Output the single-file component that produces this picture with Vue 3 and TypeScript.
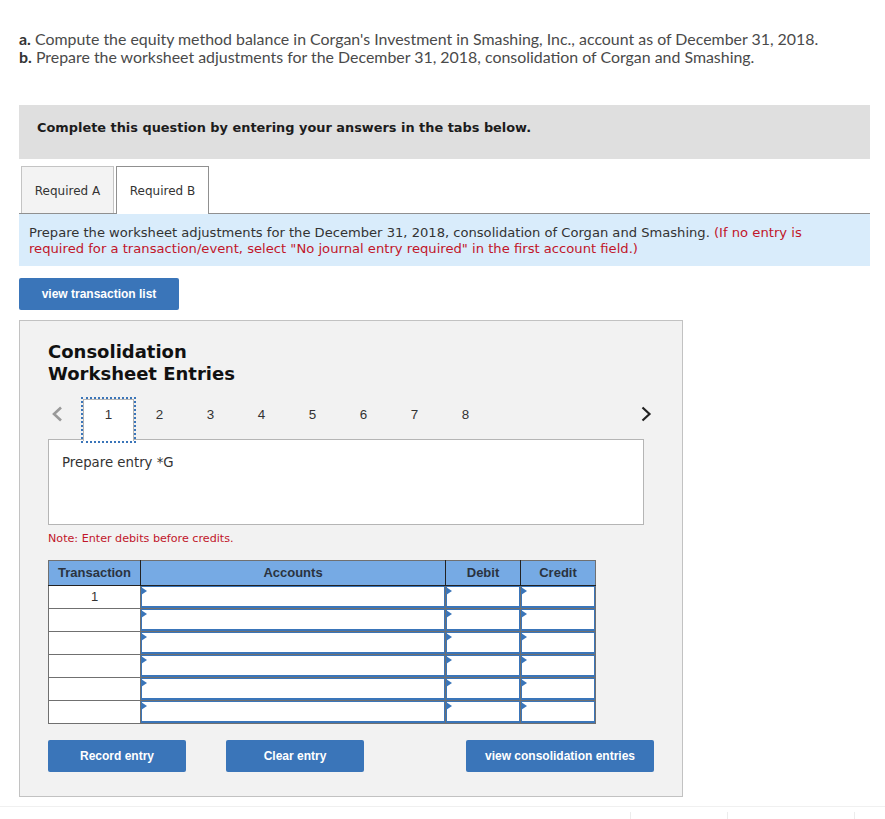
<template>
  <div class="page">
    <div class="intro">
      <p><b>a.</b> Compute the equity method balance in Corgan's Investment in Smashing, Inc., account as of December 31, 2018.</p>
      <p><b>b.</b> Prepare the worksheet adjustments for the December 31, 2018, consolidation of Corgan and Smashing.</p>
    </div>

    <div class="complete">Complete this question by entering your answers in the tabs below.</div>

    <div class="tabs">
      <div class="tab">Required A</div>
      <div class="tab active">Required B</div>
    </div>

    <div class="instructions">
      Prepare the worksheet adjustments for the December 31, 2018, consolidation of Corgan and Smashing.
      <span class="red">(If no entry is required for a transaction/event, select "No journal entry required" in the first account field.)</span>
    </div>

    <button class="btn list-btn">view transaction list</button>

    <div class="panel">
      <h2>Consolidation<br />Worksheet Entries</h2>

      <div class="pager">
        <svg class="arrow" width="14" height="20" viewBox="0 0 14 20">
          <path d="M11 3.5 L4 10 L11 16.5" fill="none" stroke="#999" stroke-width="2.6" />
        </svg>
        <div class="pages">
          <div v-for="n in pages" :key="n" class="page-num" :class="{ current: n === 1 }">{{ n }}</div>
        </div>
        <svg class="arrow" width="14" height="20" viewBox="0 0 14 20">
          <path d="M2.5 3.5 L9.5 10 L2.5 16.5" fill="none" stroke="#222" stroke-width="2.2" />
        </svg>
      </div>

      <div class="entry-box">Prepare entry *G</div>
      <div class="note">Note: Enter debits before credits.</div>

      <table class="entries">
        <thead>
          <tr>
            <th class="c-trans">Transaction</th>
            <th class="c-acct">Accounts</th>
            <th class="c-num">Debit</th>
            <th class="c-num">Credit</th>
          </tr>
        </thead>
        <tbody>
          <tr v-for="(row, i) in rows" :key="i">
            <td class="trans">{{ row }}</td>
            <td v-for="c in 3" :key="c" class="field"><div class="input"></div></td>
          </tr>
        </tbody>
      </table>

      <div class="actions">
        <button class="btn record">Record entry</button>
        <button class="btn clear">Clear entry</button>
        <button class="btn view">view consolidation entries</button>
      </div>
    </div>

    <div class="footer">
      <span class="tick t1"></span>
      <span class="tick t2"></span>
      <span class="tick t3"></span>
    </div>
  </div>
</template>

<script setup lang="ts">
const pages: number[] = [1, 2, 3, 4, 5, 6, 7, 8];
const rows: string[] = ['1', '', '', '', '', ''];
</script>

<style>
body {
  background: #fff;
}
</style>

<style scoped>
.page {
  width: 885px;
  height: 819px;
  overflow: hidden;
  box-sizing: border-box;
  padding: 30px 15px 0 19px;
  font-family: "DejaVu Sans", sans-serif;
  color: #222;
}

.intro {
  font-family: "Lato", sans-serif;
  font-size: 15.92px;
  line-height: 18px;
  color: #4a4a4a;
  height: 75px;
}

.intro p {
  margin: 0;
  white-space: nowrap;
}

.intro b {
  color: #333;
}

.complete {
  height: 54px;
  line-height: 45px;
  background: #dfdfdf;
  padding-left: 18px;
  font-size: 12.9px;
  font-weight: bold;
  color: #1c1c1c;
}

.tabs {
  display: flex;
  gap: 2px;
  padding: 7px 0 0 2px;
  border-bottom: 1px solid #909090;
  height: 47px;
}

.tab {
  width: 93px;
  height: 47px;
  box-sizing: border-box;
  border: 1px solid #c4c4c4;
  border-bottom: none;
  background: #f3f3f3;
  font-size: 12px;
  line-height: 48px;
  text-align: center;
  color: #333;
}

.tab.active {
  height: 48px;
  background: #fff;
  border-color: #909090;
  position: relative;
}

.instructions {
  background: #d9ecfb;
  height: 52px;
  box-sizing: border-box;
  padding: 11px 10px 0;
  font-size: 13.1px;
  line-height: 16px;
  color: #333;
}

.red {
  color: #c1162a;
  font-size: 13.15px;
}

.btn {
  display: block;
  border: none;
  border-radius: 2px;
  background: #3a75b9;
  color: #fff;
  font-family: "Liberation Sans", sans-serif;
  font-size: 12px;
  font-weight: bold;
  height: 32px;
  padding: 0;
}

.list-btn {
  width: 160px;
  margin-top: 12px;
}

.panel {
  width: 664px;
  height: 477px;
  box-sizing: border-box;
  margin-top: 10px;
  padding: 20px 28px 0;
  background: #f2f2f2;
  border: 1px solid #c2c2c2;
}

h2 {
  margin: 0;
  font-size: 18px;
  line-height: 22px;
  font-weight: bold;
  color: #111;
}

.pager {
  display: flex;
  align-items: flex-start;
  justify-content: space-between;
  width: 606px;
  height: 43px;
  margin-top: 13px;
  position: relative;
  z-index: 1;
}

.arrow {
  margin-top: 6px;
  margin-left: 2px;
  flex: none;
}

.pages {
  display: flex;
  margin-left: 18px;
  margin-right: auto;
}

.page-num {
  width: 51px;
  height: 43px;
  box-sizing: border-box;
  font-family: "Liberation Sans", sans-serif;
  font-size: 13.4px;
  line-height: 34px;
  text-align: center;
  color: #333;
}

.page-num.current {
  height: 42px;
  margin: 1px 0 0 1px;
  line-height: 30px;
  background: #fff;
  border: 1px solid #b5b5b5;
  border-bottom: none;
  outline: 2px dotted #3a75b9;
}

.entry-box {
  width: 596px;
  height: 86px;
  box-sizing: border-box;
  margin-top: -2px;
  padding: 15px 13px;
  background: #fff;
  border: 1px solid #b5b5b5;
  font-size: 13.3px;
  line-height: 16px;
  color: #333;
}

.note {
  margin-top: 7px;
  font-size: 11.15px;
  line-height: 14px;
  color: #c1162a;
}

.entries {
  margin-top: 14px;
  width: 547px;
  table-layout: fixed;
  border-collapse: collapse;
  font-family: "Liberation Sans", sans-serif;
  font-size: 13px;
  color: #333;
  background: #fff;
}

th {
  box-sizing: border-box;
  height: 25px;
  padding: 0 0 2px;
  background: #76aae4;
  border: 1px solid #222;
  border-top-color: #707070;
  font-weight: bold;
  color: #2a3340;
}

th:first-child {
  border-left-color: #707070;
}

th:last-child {
  border-right-color: #707070;
}

.c-trans {
  width: 92px;
}

.c-acct {
  width: 305px;
}

.c-num {
  width: 75px;
}

td {
  box-sizing: border-box;
  height: 23px;
  padding: 0;
  border: 1px solid #707070;
}

.trans {
  text-align: center;
  vertical-align: top;
  padding-top: 3px;
}

.field {
  position: relative;
}

.input {
  position: absolute;
  inset: 0;
  border: 1px solid #3a75b9;
  border-bottom-width: 2px;
  background: #fff;
}

.input::before {
  content: "";
  position: absolute;
  left: -1px;
  top: 0;
  border-left: 6px solid #3a75b9;
  border-top: 4px solid transparent;
  border-bottom: 4px solid transparent;
}

.actions {
  display: flex;
  margin-top: 16px;
}

.record {
  width: 138px;
}

.clear {
  width: 138px;
  margin-left: 40px;
}

.view {
  width: 188px;
  margin-left: 102px;
}

.footer {
  position: absolute;
  left: 0;
  top: 806px;
  width: 885px;
  height: 13px;
  border-top: 1px solid #f0f0f0;
}

.tick {
  position: absolute;
  top: 5px;
  width: 1px;
  height: 8px;
  background: #ececec;
}

.t1 {
  left: 630px;
}

.t2 {
  left: 727px;
}

.t3 {
  left: 854px;
}
</style>
